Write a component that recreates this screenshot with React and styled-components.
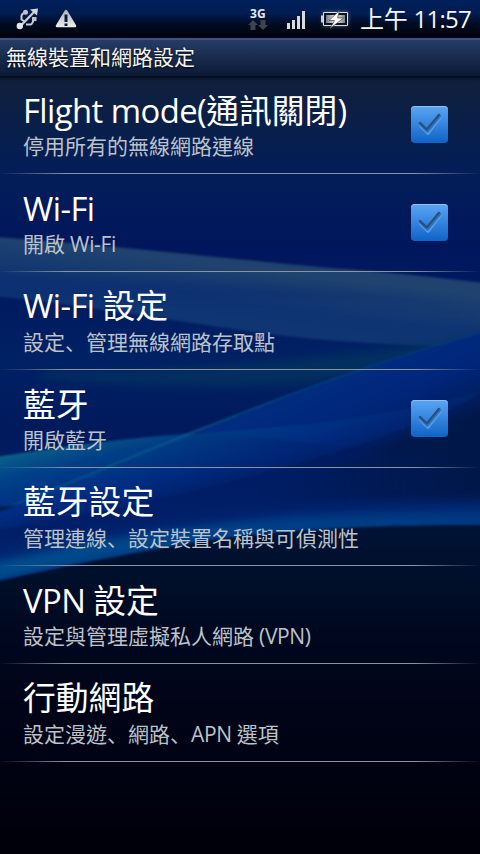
import React from "react";
import styled, { createGlobalStyle } from "styled-components";

const GlobalStyle = createGlobalStyle`
  * {
    box-sizing: border-box;
  }

  body {
    margin: 0;
    background: #00000c;
    font-family: "Open Sans", "Noto Sans CJK TC", sans-serif;
  }
`;

const Screen = styled.div`
  position: relative;
  display: flex;
  flex-direction: column;
  width: 480px;
  height: 854px;
  overflow: hidden;
  isolation: isolate;
`;

const WallpaperSvg = styled.svg`
  position: absolute;
  inset: 0;
  z-index: -1;

  filter {
    color-interpolation-filters: sRGB;
  }
`;

const StatusBar = styled.header`
  display: flex;
  align-items: center;
  height: 38px;
  padding: 0 9px 0 16px;
  background: linear-gradient(#00205a 0%, #001d52 35%, #000a20 65%, #00030a 100%);
`;

const StatusGroup = styled.div`
  display: flex;
  align-items: center;
  gap: ${({ $gap }) => $gap}px;
`;

const Spacer = styled.div`
  flex: 1;
`;

const Icon = styled.svg`
  display: block;
  flex: none;
`;

const NetworkType = styled.div`
  display: flex;
  flex-direction: column;
  align-items: center;
  width: 20px;
  height: 24px;
  color: #e4e9ef;
  font-size: 12px;
  font-weight: 700;
  line-height: 13px;
`;

const Clock = styled.time`
  margin-left: 8px;
  color: #f4f6fa;
  font-size: 24px;
  line-height: 38px;
  white-space: nowrap;
`;

const TitleBar = styled.h1`
  height: 38px;
  margin: 0;
  padding-left: 6px;
  border-top: 2px solid #3c5384;
  background: linear-gradient(#263c66, #0b1a35);
  box-shadow: 0 1px 3px 1px #000814;
  color: #f4f4f4;
  font-size: 21px;
  font-weight: 400;
  line-height: 34px;
  text-shadow: 0 1px 2px #000;
`;

const List = styled.ul`
  margin: 0;
  padding: 0;
  list-style: none;
`;

const Row = styled.li`
  display: flex;
  align-items: center;
  height: 98px;
  padding: 0 32px 0 23px;
  border-bottom: 1px solid;
  border-image: linear-gradient(90deg, transparent, #8b939f 14%, #8b939f 86%, transparent) 1;
`;

const RowText = styled.div`
  flex: 1;
  padding-top: 2px;
  white-space: nowrap;
`;

const RowTitle = styled.div`
  color: #fff;
  font-size: 32.8px;
  line-height: 40px;
`;

const RowSummary = styled.div`
  color: #bcc2ca;
  font-size: 21px;
  line-height: 30px;
`;

// the enumeration comma sits in the lower left of its cell
const Comma = styled.span`
  font-family: "Noto Sans CJK JP", sans-serif;
`;

const Latin = styled.span`
  letter-spacing: ${({ $tight }) => ($tight ? "-0.03em" : "-0.017em")};
`;

const CheckBox = styled.div`
  width: 37px;
  height: 37px;
  border-radius: 4px;
  background: linear-gradient(#5ba5f3, #0f63c8);
  box-shadow: inset 0 1px 0 #8bc0f8;
`;

const settings = [
  { title: "Flight mode(通訊關閉)", summary: "停用所有的無線網路連線", checkable: true },
  { title: "Wi-Fi", summary: "開啟 Wi-Fi", checkable: true },
  { title: "Wi-Fi 設定", summary: "設定、管理無線網路存取點" },
  { title: "藍牙", summary: "開啟藍牙", checkable: true },
  { title: "藍牙設定", summary: "管理連線、設定裝置名稱與可偵測性" },
  { title: "VPN 設定", summary: "設定與管理虛擬私人網路 (VPN)" },
  { title: "行動網路", summary: "設定漫遊、網路、APN 選項" },
];

const MixedText = ({ text, tight }) =>
  text.split(/(、|[ -~]+)/).map((part, i) => {
    if (part === "、") return <Comma key={i}>{part}</Comma>;
    if (/^[ -~]+$/.test(part)) {
      return (
        <Latin key={i} $tight={tight}>
          {part}
        </Latin>
      );
    }
    return part;
  });

const Wallpaper = () => (
  <WallpaperSvg width="480" height="854" viewBox="0 0 480 854">
    <defs>
      <linearGradient id="sky" gradientUnits="userSpaceOnUse" x1="0" y1="0" x2="0" y2="854">
        <stop offset="0.09" stopColor="#10203a" />
        <stop offset="0.2" stopColor="#031e58" />
        <stop offset="0.29" stopColor="#00165c" />
        <stop offset="0.42" stopColor="#002164" />
        <stop offset="0.5" stopColor="#001a5c" />
        <stop offset="0.6" stopColor="#001f68" />
      </linearGradient>
      <linearGradient id="haze" gradientUnits="userSpaceOnUse" x1="0" y1="240" x2="-12" y2="340">
        <stop offset="0" stopColor="#1f426f" />
        <stop offset="0.35" stopColor="#0f3472" />
        <stop offset="1" stopColor="#103872" />
      </linearGradient>
      <linearGradient id="streak" gradientUnits="userSpaceOnUse" x1="0" y1="0" x2="480" y2="0">
        <stop offset="0" stopColor="#04508c" />
        <stop offset="0.42" stopColor="#0a6290" />
        <stop offset="0.7" stopColor="#02408a" />
        <stop offset="1" stopColor="#02408a" stopOpacity="0.4" />
      </linearGradient>
      <linearGradient id="wing" gradientUnits="userSpaceOnUse" x1="340" y1="375" x2="375" y2="455">
        <stop offset="0" stopColor="#002c80" />
        <stop offset="0.5" stopColor="#00267a" />
        <stop offset="1" stopColor="#001a54" />
      </linearGradient>
      <linearGradient id="fall" gradientUnits="userSpaceOnUse" x1="60" y1="444" x2="76" y2="515">
        <stop offset="0" stopColor="#0a5f8a" />
        <stop offset="0.3" stopColor="#00428a" />
        <stop offset="0.75" stopColor="#002e84" />
        <stop offset="1" stopColor="#002472" />
      </linearGradient>
      <linearGradient id="fallFade" x1="0" y1="0" x2="1" y2="0">
        <stop offset="0" stopColor="#fff" />
        <stop offset="0.35" stopColor="#ddd" />
        <stop offset="1" stopColor="#444" />
      </linearGradient>
      <mask id="fallMask">
        <rect y="380" width="480" height="180" fill="url(#fallFade)" />
      </mask>
      <linearGradient id="shade" gradientUnits="userSpaceOnUse" x1="260" y1="0" x2="480" y2="0">
        <stop offset="0" stopColor="#001848" stopOpacity="0" />
        <stop offset="1" stopColor="#001848" />
      </linearGradient>
      <linearGradient id="edge" gradientUnits="userSpaceOnUse" x1="0" y1="0" x2="480" y2="0">
        <stop offset="0" stopColor="#006096" />
        <stop offset="0.6" stopColor="#00498c" />
        <stop offset="1" stopColor="#003c80" />
      </linearGradient>
      <linearGradient id="depth" gradientUnits="userSpaceOnUse" x1="0" y1="520" x2="0" y2="854">
        <stop offset="0" stopColor="#001438" />
        <stop offset="0.17" stopColor="#000f2a" />
        <stop offset="0.36" stopColor="#00071e" />
        <stop offset="0.6" stopColor="#000416" />
        <stop offset="1" stopColor="#00000a" />
      </linearGradient>
      <filter id="soft" x="-10%" y="-20%" width="120%" height="140%">
        <feGaussianBlur stdDeviation="1.2" />
      </filter>
      <filter id="medium" x="-10%" y="-30%" width="120%" height="160%">
        <feGaussianBlur stdDeviation="4" />
      </filter>
      <filter id="wide" x="-20%" y="-60%" width="140%" height="220%">
        <feGaussianBlur stdDeviation="10" />
      </filter>
    </defs>
    <rect width="480" height="854" fill="url(#sky)" />

    <path
      d="M-5 237 C120 246 220 258 330 268 C390 272 440 278 485 283 V347 C380 346 300 339 240 330 C150 318 80 305 -5 296Z"
      fill="url(#haze)"
      filter="url(#soft)"
    />
    <path d="M-5 274 C150 279 330 286 485 306 C300 296 130 300 -5 296Z" fill="#082a70" opacity="0.4" filter="url(#medium)" />
    <path d="M40 378 C160 390 290 390 350 378 C410 360 450 345 485 335 V330 C400 352 200 372 40 372Z" fill="#05355f" opacity="0.7" filter="url(#medium)" />

    <path d="M195 433 C300 390 400 355 485 332 V470 C400 450 300 440 195 433Z" fill="url(#wing)" filter="url(#soft)" />
    <path d="M250 500 C380 450 440 425 500 402 V500 H250Z" fill="url(#shade)" filter="url(#medium)" />
    <g mask="url(#fallMask)">
      <path
        d="M-5 457 C60 447 130 437 200 433 C280 428 380 420 485 390 C430 425 350 448 280 468 C190 494 100 512 -5 530Z"
        fill="url(#fall)"
        filter="url(#soft)"
      />
    </g>
    <path d="M-5 512 C80 480 150 448 225 420 C310 386 400 355 485 331" fill="none" stroke="url(#streak)" strokeWidth="2" opacity="0.8" filter="url(#soft)" />
    <path d="M-5 507 L18 505 L-5 514Z" fill="#001a50" filter="url(#soft)" />

    <path d="M-20 562 C100 540 260 515 500 510 V535 L-20 590Z" fill="#004490" opacity="0.75" filter="url(#wide)" />
    <path d="M-5 571 C90 549 190 531 300 524 C370 521 430 521 485 521" fill="none" stroke="url(#edge)" strokeWidth="14" opacity="0.6" filter="url(#medium)" />
    <path
      d="M-5 582 C60 567 130 553 205 541 C290 528 390 525 485 525 V1000 H-5Z"
      fill="url(#depth)"
      filter="url(#soft)"
    />
  </WallpaperSvg>
);

const UsbIcon = () => (
  <Icon width="23" height="22" viewBox="0 0 23 22" fill="none" stroke="#c6ccd4" strokeWidth="2">
    <path d="M4 18.500 19 3" strokeWidth="2.400" />
    <path d="M8.500 13.500 5.500 11.500V8.500C5.500 6.500 7 5 9.500 4.500M10 16.500h4.500c1.500 0 2-1.500 3-4" />
    <path d="M14 1.500 22 .5l-1 7z" fill="#d3d8de" stroke="none" />
    <circle cx="3.800" cy="18" r="3.200" fill="#e2e5e9" stroke="none" />
    <circle cx="9.500" cy="4.300" r="2.500" fill="#bcc3cc" stroke="none" />
    <path d="M16 9h4.500v4H16z" fill="#bcc3cc" stroke="none" />
  </Icon>
);

const WarningIcon = () => (
  <Icon width="22" height="20" viewBox="0 0 22 20">
    <defs>
      <linearGradient id="warn" gradientUnits="userSpaceOnUse" x1="0" y1="0" x2="0" y2="19">
        <stop offset="0" stopColor="#a9b0bc" />
        <stop offset="1" stopColor="#f0f0ec" />
      </linearGradient>
    </defs>
    <path d="M11 2 20 17H2Z" fill="url(#warn)" stroke="url(#warn)" strokeWidth="2.500" strokeLinejoin="round" />
    <path d="M9.500 5.500h3v7.500h-3zM9.500 14.500h3V17h-3z" fill="#0a1a38" />
  </Icon>
);

const DataArrows = () => (
  <Icon width="20" height="11" viewBox="0 0 20 11" fill="#3c444f">
    <path d="M5 0 10 5H7.500V10H2.500V5H0ZM12.500 0H17.500V5H20L15 10 10 5H12.500Z" />
  </Icon>
);

const SignalIcon = () => (
  <Icon width="18" height="20" viewBox="0 0 18 20" fill="#d8dade">
    <path d="M0 14h3v6H0zM5 11h3v9H5zM10 7h3v13h-3zM15 2h3v18h-3z" />
  </Icon>
);

const BatteryIcon = () => (
  <Icon width="34" height="24" viewBox="0 0 34 24">
    <defs>
      <filter id="glow" x="-20%" y="-40%" width="140%" height="180%">
        <feGaussianBlur stdDeviation="2" />
      </filter>
      <linearGradient id="cell" x1="0" y1="0" x2="1" y2="0">
        <stop offset="0" stopColor="#6f7681" />
        <stop offset="0.5" stopColor="#f0f0ee" />
        <stop offset="1" stopColor="#7b828c" />
      </linearGradient>
    </defs>
    <rect x="5" y="5" width="25" height="14" fill="#7d8ba6" opacity="0.7" filter="url(#glow)" />
    <path d="M3 8.500h3v7H3z" fill="#ccd0d6" />
    <path d="M5.500 5.500h24v13h-24z" fill="#10151d" stroke="#d9dce1" />
    <path d="M8 8h19v8H8z" fill="url(#cell)" />
    <path d="M21.500 3.500 11 13.500h5.500L12 21.500 25.500 11H19.500Z" fill="#fffef4" stroke="#41454a" strokeWidth="0.7" />
  </Icon>
);

const CheckMark = () => (
  <Icon width="37" height="37" viewBox="0 0 37 37" fill="none" strokeLinecap="round" strokeLinejoin="round">
    <path d="M9.500 19.500 17 27 29 11.500" stroke="#5a9fe9" strokeWidth="3.500" />
    <path d="M9.500 18 16.500 25 28.500 10" stroke="#2e74c4" strokeWidth="3.500" />
    <path d="M9 17 15.800 23.500 28 8.800" stroke="#2a4f7c" strokeWidth="2.200" />
  </Icon>
);

const App = () => (
  <Screen>
    <GlobalStyle />
    <Wallpaper />
    <StatusBar>
      <StatusGroup $gap={16}>
        <UsbIcon />
        <WarningIcon />
      </StatusGroup>
      <Spacer />
      <StatusGroup $gap={13}>
        <StatusGroup $gap={19}>
          <NetworkType>
            3G
            <DataArrows />
          </NetworkType>
          <SignalIcon />
        </StatusGroup>
        <BatteryIcon />
      </StatusGroup>
      <Clock>
        <MixedText text="上午 11:57" tight />
      </Clock>
    </StatusBar>
    <TitleBar>無線裝置和網路設定</TitleBar>
    <List>
      {settings.map(({ title, summary, checkable }) => (
        <Row key={title}>
          <RowText>
            <RowTitle>
              <MixedText text={title} />
            </RowTitle>
            <RowSummary>
              <MixedText text={summary} />
            </RowSummary>
          </RowText>
          {checkable && (
            <CheckBox>
              <CheckMark />
            </CheckBox>
          )}
        </Row>
      ))}
    </List>
  </Screen>
);

export default App;
